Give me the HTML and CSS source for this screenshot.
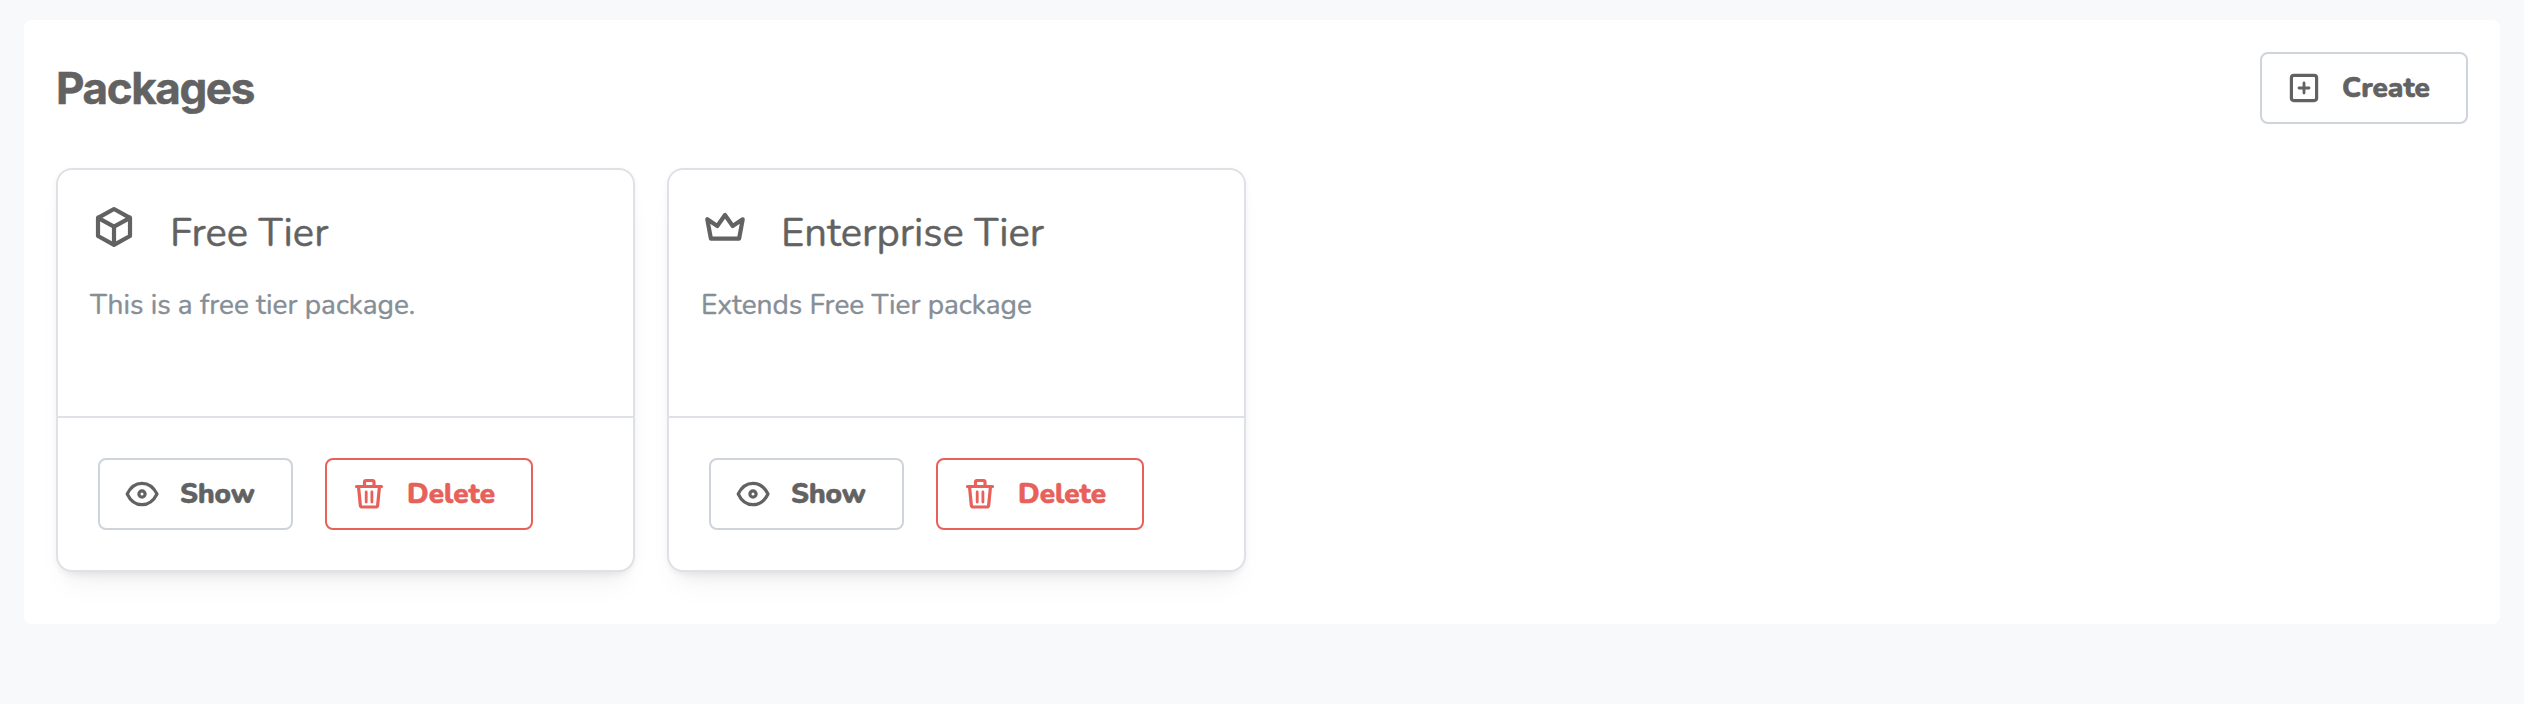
FILE: index.html
```html
<!DOCTYPE html>
<html lang="en">
<head>
<meta charset="utf-8">
<title>Packages</title>
<link rel="stylesheet" href="styles.css">
</head>
<body>
<svg class="sprite" aria-hidden="true">
  <symbol id="cube" viewBox="0 0 54 54"><path d="M28 9 44 17.800V36L28 44.800 12 36V17.800ZM12 17.800 28 26.600 44 17.800M28 26.600V44.800"/></symbol>
  <symbol id="crown" viewBox="0 0 54 54"><path d="M10.300 19.300 13.900 38.700H42.100L45.700 19.300 35.700 26 28 15 20.300 26Z"/></symbol>
  <symbol id="eye" viewBox="0 0 44 44"><path d="M7.200 22C10.500 15 16 11.300 22 11.300S33.500 15 37 22C33.500 29 28 32.700 22 32.700S10.500 29 7.200 22Z"/><circle cx="22" cy="22" r="3.100"/></symbol>
  <symbol id="trash" viewBox="0 0 44 44"><path d="M9.500 14.500H34.500M17.500 14V10Q17.500 8.500 19 8.500H25.500Q27 8.500 27 10V14M11.500 14.500 13.300 33Q13.500 35 15.300 35H28.700Q30.500 35 30.700 33L32.500 14.500"/><path class="thin" d="M19.200 20V30M24.900 20V30"/></symbol>
  <symbol id="plus" viewBox="0 0 44 44"><rect x="9.400" y="9.400" width="25.200" height="25.200" rx="2.500"/><path class="thin" d="M22 17V27M17 22H27"/></symbol>
</svg>
<main class="panel">
  <header class="panel-header">
    <h1 class="title">Packages</h1>
    <button class="btn create"><svg class="btn-icon"><use href="#plus"/></svg><span>Create</span></button>
  </header>
  <section class="grid">
    <article class="card">
      <div class="card-body">
        <h2 class="card-title"><svg class="card-icon"><use href="#cube"/></svg><span>Free Tier</span></h2>
        <p class="desc">This is a free tier package.</p>
      </div>
      <footer class="card-footer">
        <button class="btn show"><svg class="btn-icon"><use href="#eye"/></svg><span>Show</span></button>
        <button class="btn danger"><svg class="btn-icon"><use href="#trash"/></svg><span>Delete</span></button>
      </footer>
    </article>
    <article class="card">
      <div class="card-body">
        <h2 class="card-title"><svg class="card-icon"><use href="#crown"/></svg><span>Enterprise Tier</span></h2>
        <p class="desc">Extends Free Tier package</p>
      </div>
      <footer class="card-footer">
        <button class="btn show"><svg class="btn-icon"><use href="#eye"/></svg><span>Show</span></button>
        <button class="btn danger"><svg class="btn-icon"><use href="#trash"/></svg><span>Delete</span></button>
      </footer>
    </article>
  </section>
</main>
</body>
</html>
```
FILE: styles.css
```css
* { box-sizing: border-box; }
body { margin: 0; padding: 20px 24px; background: #f8f9fb; color: #626262; font-family: Nunito, Lato, sans-serif; }
.sprite { display: none; }
.panel { height: 604px; padding: 32px; background: #fff; border-radius: 8px; }
.panel-header { display: flex; justify-content: space-between; align-items: center; height: 72px; margin-bottom: 44px; }
.title { margin: 0; font: 700 44px/52px Inter, sans-serif; letter-spacing: -1.4px; -webkit-text-stroke: .5px; }
.grid { display: grid; grid-template-columns: repeat(4, 1fr); gap: 32px; }
.card { height: 404px; border: 2px solid #dee2e6; border-radius: 16px; background: #fff; box-shadow: 0 20px 30px -10px rgba(0,0,0,.05), 0 14px 14px -10px rgba(0,0,0,.05), 0 2px 6px rgba(0,0,0,.05); }
.card-body { height: 246px; padding: 30px 32px; }
.card-title { display: flex; align-items: flex-start; margin: 0; height: 54px; font-size: 40px; font-weight: 400; line-height: 66px; white-space: nowrap; -webkit-text-stroke: .4px; }
.card-icon { flex: none; width: 54px; height: 54px; margin: 0 30px 0 -4px; fill: none; stroke: currentColor; stroke-width: 4.2; stroke-linejoin: round; stroke-linecap: round; }
.desc { margin: 31px 0 0; font-size: 28px; line-height: 40px; color: #868e96; -webkit-text-stroke: .4px; }
.card-footer { display: flex; gap: 32px; height: 154px; padding: 40px; border-top: 2px solid #dee2e6; }
.btn { display: flex; align-items: center; height: 72px; padding: 0 0 0 20px; border: 2px solid #ced4da; border-radius: 8px; background: #fff; color: inherit; font: 800 28px/40px Nunito, Lato, sans-serif; -webkit-text-stroke: .6px; }
.btn-icon { flex: none; width: 44px; height: 44px; fill: none; stroke: currentColor; stroke-width: 3.2; stroke-linejoin: round; stroke-linecap: round; }
.thin { stroke-width: 2.8; }
.btn span { margin-left: 16px; }
.show { width: 195px; }
.danger, .create { width: 208px; }
.danger { border-color: #e8605a; color: #e8605a; }
```
